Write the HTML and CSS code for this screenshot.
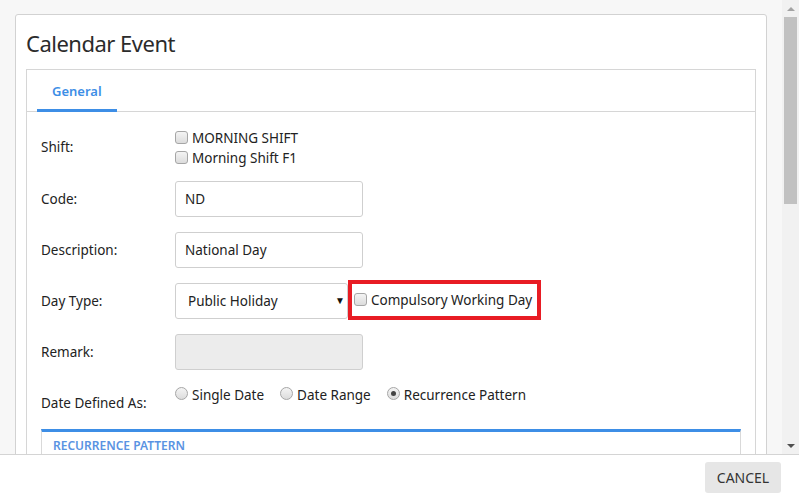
FILE: index.html
```html
<!DOCTYPE html>
<html lang="en">
<head>
    <meta charset="UTF-8">
    <meta name="viewport" content="width=device-width, initial-scale=1.0">
    <title>Calendar Event</title>
    <link rel="stylesheet" href="styles.css">
</head>
<body>
    <div class="window">
        <div class="viewport">
            <div class="scroll-area">
                <div class="card">
                    <h1 class="card-title">Calendar Event</h1>

                    <div class="panel">
                        <div class="tabs">
                            <a class="tab active">General</a>
                        </div>

                        <div class="tab-body">
                            <!-- shift -->
                            <div class="form-row shift-row">
                                <label class="form-label">Shift:</label>
                                <div class="check-list">
                                    <label class="check"><input type="checkbox"> MORNING SHIFT</label>
                                    <label class="check"><input type="checkbox"> Morning Shift F1</label>
                                </div>
                            </div>

                            <div class="form-row">
                                <label class="form-label">Code:</label>
                                <input type="text" class="text-input" value="ND">
                            </div>

                            <div class="form-row">
                                <label class="form-label">Description:</label>
                                <input type="text" class="text-input" value="National Day">
                            </div>

                            <div class="form-row">
                                <label class="form-label">Day Type:</label>
                                <div class="select-wrap">
                                    <select class="select-input">
                                        <option>Public Holiday</option>
                                    </select>
                                </div>
                                <div class="highlight">
                                    <label class="check"><input type="checkbox"> Compulsory Working Day</label>
                                </div>
                            </div>

                            <div class="form-row">
                                <label class="form-label">Remark:</label>
                                <input type="text" class="text-input" disabled>
                            </div>

                            <div class="form-row date-row">
                                <label class="form-label">Date Defined As:</label>
                                <div class="radio-list">
                                    <label class="check"><input type="radio" name="dateType"> Single Date</label>
                                    <label class="check"><input type="radio" name="dateType"> Date Range</label>
                                    <label class="check"><input type="radio" name="dateType" checked> Recurrence Pattern</label>
                                </div>
                            </div>

                            <!-- recurrence -->
                            <div class="subpanel">
                                <div class="subpanel-title">RECURRENCE PATTERN</div>
                            </div>
                        </div>
                    </div>
                </div>
            </div>

            <div class="scrollbar">
                <span class="arrow arrow-up"></span>
                <div class="track"><div class="thumb"></div></div>
                <span class="arrow arrow-down"></span>
            </div>
        </div>

        <div class="footer">
            <button class="btn">CANCEL</button>
        </div>
    </div>
</body>
</html>
```

FILE: styles.css
```css
* {
    box-sizing: border-box;
    font-family: "Noto Sans", "Open Sans", sans-serif;
}

body {
    margin: 0;
    background: #ffffff;
    color: #333;
    font-size: 14px;
}

.window {
    width: 799px;
    height: 497px;
    display: flex;
    flex-direction: column;
}

.viewport {
    height: 455px;
    display: flex;
    border-bottom: 1px solid #d4d4d4;
    overflow: hidden;
}

.scroll-area {
    flex: 1;
    background: #f7f7f7;
    padding: 14px 15px 0 15px;
    overflow: hidden;
}

.card {
    background: white;
    border: 1px solid #d2d2d2;
    border-radius: 3px 3px 0 0;
    padding: 0 10px 20px 10px;
    height: 600px;
}

.card-title {
    margin: 0;
    padding: 11px 0 9px 0;
    font-size: 22px;
    letter-spacing: -0.5px;
    font-weight: 400;
    line-height: 34px;
    color: #2b2b2b;
}

.panel {
    border: 1px solid #d6d6d6;
    height: 500px;
}

.tabs {
    display: flex;
    height: 42px;
    padding-left: 10px;
    border-bottom: 1px solid #d6d6d6;
}

.tab {
    display: flex;
    align-items: center;
    padding: 0 15px;
    font-size: 13px;
    font-weight: 600;
    color: #3d8ee6;
    border-bottom: 3px solid transparent;
    margin-bottom: -1px;
    padding-top: 2px;
}

.tab.active {
    border-bottom-color: #3d8ee6;
}

.tab-body {
    padding: 16px 14px 15px 14px;
}

.form-row {
    display: flex;
    align-items: center;
    margin-bottom: 15px;
}

.shift-row {
    margin-bottom: 13px;
}

.shift-row .form-label {
    padding-bottom: 3px;
}

.form-label {
    width: 134px;
    flex-shrink: 0;
    font-size: 13.5px;
    color: #222;
}

.check-list,
.radio-list {
    display: flex;
    flex-direction: column;
}

.radio-list {
    flex-direction: row;
    gap: 16px;
    align-self: flex-start;
}

.check {
    display: flex;
    align-items: center;
    gap: 4px;
    height: 20px;
    font-size: 13.5px;
    color: #222;
}

input[type="checkbox"],
input[type="radio"] {
    appearance: none;
    -webkit-appearance: none;
    margin: 0;
    width: 13px;
    height: 13px;
    border: 1px solid #a6a6a6;
    border-radius: 3px;
    background: linear-gradient(#f4f4f4, #dcdcdc);
    position: relative;
    top: -1px;
}

input[type="radio"] {
    border-radius: 50%;
    top: -2px;
}

input[type="radio"]:checked::after {
    content: "";
    position: absolute;
    left: 3px;
    top: 3px;
    width: 5px;
    height: 5px;
    border-radius: 50%;
    background: #444;
}

.text-input,
.select-input {
    width: 188px;
    height: 36px;
    border: 1px solid #cfcfcf;
    border-radius: 3px;
    padding: 0 9px;
    font-size: 13.5px;
    color: #222;
    background: white;
}

.text-input:disabled {
    background: #ececec;
}

.select-wrap {
    position: relative;
}

.select-input {
    appearance: none;
    -webkit-appearance: none;
    width: 173px;
    padding-left: 12px;
}

.select-wrap::after {
    content: "▼";
    position: absolute;
    right: 3px;
    top: 10px;
    font-size: 10px;
    color: #111;
}

.highlight {
    height: 40px;
    margin: -5px 0 -3px 0;
    border: 4px solid #e81c24;
    padding: 0 5px 0 2px;
    display: flex;
    align-items: center;
}

.date-row {
    height: 36px;
    margin-bottom: 8px;
}

.subpanel {
    border: 1px solid #d9d9d9;
    border-top: 3px solid #3d8ee6;
    padding: 5px 11px;
    height: 100px;
}

.subpanel-title {
    font-size: 12px;
    font-weight: 600;
    color: #5a93e2;
}

/* fake scrollbar */
.scrollbar {
    width: 17px;
    background: #f1f1f1;
    display: flex;
    flex-direction: column;
    align-items: center;
}

.arrow {
    height: 17px;
    width: 17px;
    display: flex;
    align-items: center;
    justify-content: center;
}

.arrow::before {
    content: "";
    border-left: 4px solid transparent;
    border-right: 4px solid transparent;
}

.arrow-up::before {
    border-bottom: 4px solid #a3a3a3;
}

.arrow-down::before {
    border-top: 4px solid #505050;
}

.track {
    flex: 1;
    width: 100%;
    padding: 0 2px;
}

.thumb {
    height: 187px;
    background: #c1c1c1;
}

.footer {
    flex: 1;
    display: flex;
    justify-content: flex-end;
    align-items: flex-start;
    padding: 7px 18px 0 0;
}

.btn {
    width: 76px;
    height: 31px;
    border: none;
    border-radius: 3px;
    background: #e6e6e6;
    color: #333;
    font-size: 14px;
    cursor: pointer;
}
```
